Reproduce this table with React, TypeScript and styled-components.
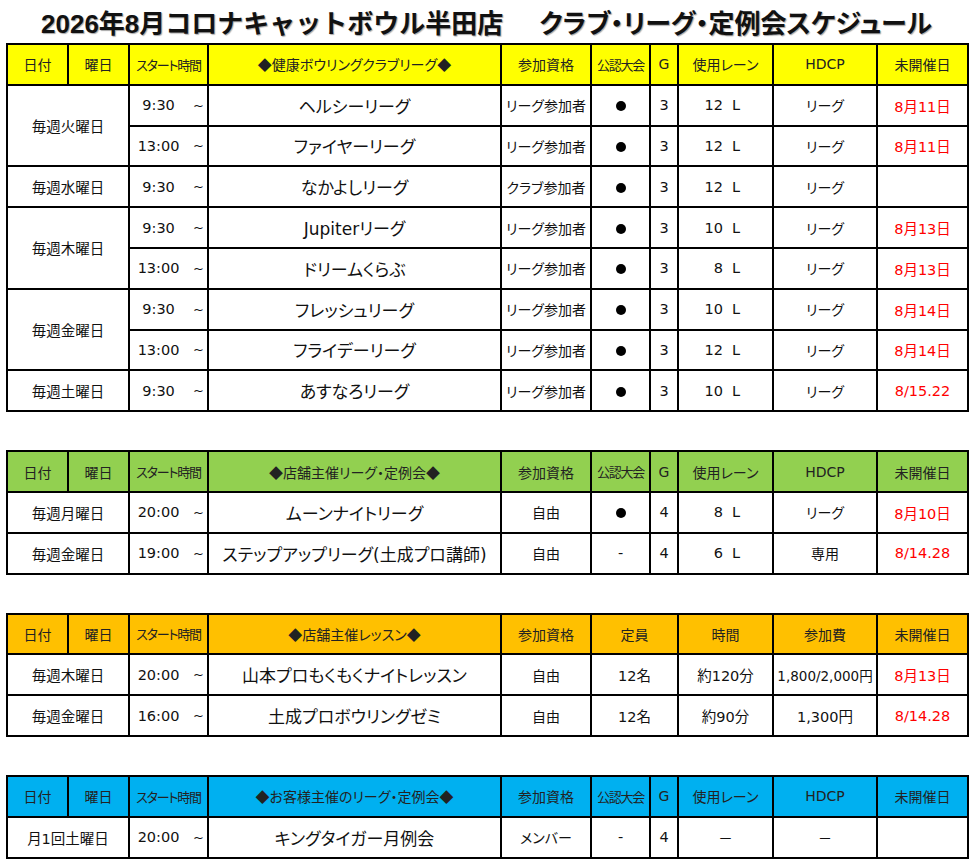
import React from "react";
import styled, { createGlobalStyle } from "styled-components";

const GlobalStyle = createGlobalStyle`
  body {
    margin: 0;
    background: #fff;
    color: #111;
    font-family: "DejaVu Sans", "Noto Sans CJK JP", sans-serif;
    font-feature-settings: "palt";
  }
`;

// ページ全体
const Page = styled.div`
  width: 961px;
  padding-left: 6px;
`;

// タイトル行
const Title = styled.h1`
  display: flex;
  justify-content: center;
  align-items: center;
  gap: 36px;
  height: 43px;
  margin: 0;
  font-family: "Liberation Sans", "Noto Sans CJK JP", sans-serif;
  font-size: 26px;
  font-weight: 700;
  color: #111;
  text-shadow: 1px 1px 1px rgba(0, 0, 0, 0.35);
  white-space: nowrap;
`;

const TitlePart = styled.span<{ $prop?: boolean }>`
  font-feature-settings: ${(p) => (p.$prop ? '"palt"' : "normal")};
`;

const Table = styled.table`
  width: 961px;
  border-collapse: collapse;
  table-layout: fixed;
  margin-bottom: 38px;
`;

const Row = styled.tr`
  height: 40.8px;
`;

const HeadRow = styled.tr<{ $bg: string }>`
  height: 40.8px;
  background: ${(p) => p.$bg};
`;

const Th = styled.th<{ $tight?: boolean; $title?: boolean }>`
  border: 2px solid #000;
  padding: 0;
  font-weight: 400;
  font-family: ${(p) =>
    p.$title ? '"Noto Sans CJK JP", sans-serif' : "inherit"};
  font-size: ${(p) => (p.$tight ? "13px" : "14px")};
  letter-spacing: ${(p) => (p.$tight ? "-1.2px" : "0")};
  color: #222;
  text-align: center;
  vertical-align: middle;
  white-space: nowrap;
`;

type Kind = "plain" | "name" | "date" | "fee" | "qual";

const Td = styled.td<{ $kind?: Kind }>`
  border: 2px solid #000;
  padding: 0;
  text-align: center;
  vertical-align: middle;
  white-space: nowrap;
  font-size: ${(p) =>
    p.$kind === "name"
      ? "17px"
      : p.$kind === "fee"
      ? "13.5px"
      : p.$kind === "qual"
      ? "14px"
      : "14.5px"};
  color: ${(p) => (p.$kind === "date" ? "#ff0000" : "#111")};
  overflow: hidden;
`;

// スタート時間セル
const TimeBox = styled.div`
  display: flex;
  align-items: center;
  padding-right: 3px;
`;

const Clock = styled.span`
  flex: 1;
  text-align: center;
  padding-right: 6px;
`;

const Tilde = styled.span`
  font-size: 13px;
`;

// 使用レーン
const LaneBox = styled.div`
  display: flex;
  justify-content: center;
  align-items: center;
  padding-right: 8px;
`;

const LaneNum = styled.span`
  width: 20px;
  text-align: right;
`;

const LaneUnit = styled.span`
  margin-left: 9px;
`;

const Dot = styled.span`
  display: inline-block;
  width: 10px;
  height: 10px;
  border-radius: 50%;
  background: #000;
  vertical-align: middle;
`;

const Lanes = ({ n }: { n: number }) => (
  <LaneBox>
    <LaneNum>{n}</LaneNum>
    <LaneUnit>L</LaneUnit>
  </LaneBox>
);

type Cell = { content?: React.ReactNode; span?: number; kind?: Kind };
type Head = { text: string; span?: number; tight?: boolean; title?: boolean };
type Entry = {
  day?: string;
  daySpan?: number;
  time: string;
  name: string;
  cells: Cell[];
};
type Section = { color: string; heads: Head[]; rows: Entry[] };

const leagueHeads = (title: string): Head[] => [
  { text: "日付" },
  { text: "曜日" },
  { text: "スタート時間", tight: true },
  { text: title, title: true },
  { text: "参加資格" },
  { text: "公認大会", tight: true },
  { text: "G" },
  { text: "使用レーン" },
  { text: "HDCP" },
  { text: "未開催日" },
];

const dot = <Dot />;

const league = (
  qual: string,
  official: React.ReactNode,
  g: number,
  lanes: React.ReactNode,
  hdcp: string,
  date: string
): Cell[] => [
  { content: qual, kind: "qual" },
  { content: official },
  { content: g },
  { content: lanes },
  { content: hdcp, kind: "qual" },
  { content: date, kind: "date" },
];

const sections: Section[] = [
  {
    color: "#ffff00",
    heads: leagueHeads("◆健康ボウリングクラブリーグ◆"),
    rows: [
      { day: "毎週火曜日", daySpan: 2, time: "9:30", name: "ヘルシーリーグ", cells: league("リーグ参加者", dot, 3, <Lanes n={12} />, "リーグ", "8月11日") },
      { time: "13:00", name: "ファイヤーリーグ", cells: league("リーグ参加者", dot, 3, <Lanes n={12} />, "リーグ", "8月11日") },
      { day: "毎週水曜日", time: "9:30", name: "なかよしリーグ", cells: league("クラブ参加者", dot, 3, <Lanes n={12} />, "リーグ", "") },
      { day: "毎週木曜日", daySpan: 2, time: "9:30", name: "Jupiterリーグ", cells: league("リーグ参加者", dot, 3, <Lanes n={10} />, "リーグ", "8月13日") },
      { time: "13:00", name: "ドリームくらぶ", cells: league("リーグ参加者", dot, 3, <Lanes n={8} />, "リーグ", "8月13日") },
      { day: "毎週金曜日", daySpan: 2, time: "9:30", name: "フレッシュリーグ", cells: league("リーグ参加者", dot, 3, <Lanes n={10} />, "リーグ", "8月14日") },
      { time: "13:00", name: "フライデーリーグ", cells: league("リーグ参加者", dot, 3, <Lanes n={12} />, "リーグ", "8月14日") },
      { day: "毎週土曜日", time: "9:30", name: "あすなろリーグ", cells: league("リーグ参加者", dot, 3, <Lanes n={10} />, "リーグ", "8/15.22") },
    ],
  },
  {
    color: "#92d050",
    heads: leagueHeads("◆店舗主催リーグ・定例会◆"),
    rows: [
      { day: "毎週月曜日", time: "20:00", name: "ムーンナイトリーグ", cells: league("自由", dot, 4, <Lanes n={8} />, "リーグ", "8月10日") },
      { day: "毎週金曜日", time: "19:00", name: "ステップアップリーグ(土成プロ講師)", cells: league("自由", "-", 4, <Lanes n={6} />, "専用", "8/14.28") },
    ],
  },
  {
    color: "#ffc000",
    heads: [
      { text: "日付" },
      { text: "曜日" },
      { text: "スタート時間", tight: true },
      { text: "◆店舗主催レッスン◆", title: true },
      { text: "参加資格" },
      { text: "定員", span: 2 },
      { text: "時間" },
      { text: "参加費" },
      { text: "未開催日" },
    ],
    rows: [
      {
        day: "毎週木曜日",
        time: "20:00",
        name: "山本プロもくもくナイトレッスン",
        cells: [
          { content: "自由", kind: "qual" },
          { content: "12名", span: 2 },
          { content: "約120分" },
          { content: "1,800/2,000円", kind: "fee" },
          { content: "8月13日", kind: "date" },
        ],
      },
      {
        day: "毎週金曜日",
        time: "16:00",
        name: "土成プロボウリングゼミ",
        cells: [
          { content: "自由", kind: "qual" },
          { content: "12名", span: 2 },
          { content: "約90分" },
          { content: "1,300円" },
          { content: "8/14.28", kind: "date" },
        ],
      },
    ],
  },
  {
    color: "#00b0f0",
    heads: leagueHeads("◆お客様主催のリーグ・定例会◆"),
    rows: [
      { day: "月1回土曜日", time: "20:00", name: "キングタイガー月例会", cells: league("メンバー", "-", 4, "－", "－", "") },
    ],
  },
];

const colWidths = [61, 61, 79, 293, 90, 59, 28, 95, 104, 91];

const ScheduleTable = ({ section }: { section: Section }) => (
  <Table>
    <colgroup>
      {colWidths.map((w, i) => (
        <col key={i} style={{ width: w }} />
      ))}
    </colgroup>
    <tbody>
      <HeadRow $bg={section.color}>
        {section.heads.map((h, i) => (
          <Th key={i} colSpan={h.span} $tight={h.tight} $title={h.title}>
            {h.text}
          </Th>
        ))}
      </HeadRow>
      {section.rows.map((r, i) => (
        <Row key={i}>
          {r.day && (
            <Td colSpan={2} rowSpan={r.daySpan}>
              {r.day}
            </Td>
          )}
          <Td>
            <TimeBox>
              <Clock>{r.time}</Clock>
              <Tilde>~</Tilde>
            </TimeBox>
          </Td>
          <Td $kind="name">{r.name}</Td>
          {r.cells.map((c, j) => (
            <Td key={j} colSpan={c.span} $kind={c.kind}>
              {c.content}
            </Td>
          ))}
        </Row>
      ))}
    </tbody>
  </Table>
);

export default function App() {
  return (
    <>
      <GlobalStyle />
      <Page>
        <Title>
          <TitlePart>2026年8月コロナキャットボウル半田店</TitlePart>
          <TitlePart $prop>クラブ・リーグ・定例会スケジュール</TitlePart>
        </Title>
        {sections.map((s, i) => (
          <ScheduleTable key={i} section={s} />
        ))}
      </Page>
    </>
  );
}
